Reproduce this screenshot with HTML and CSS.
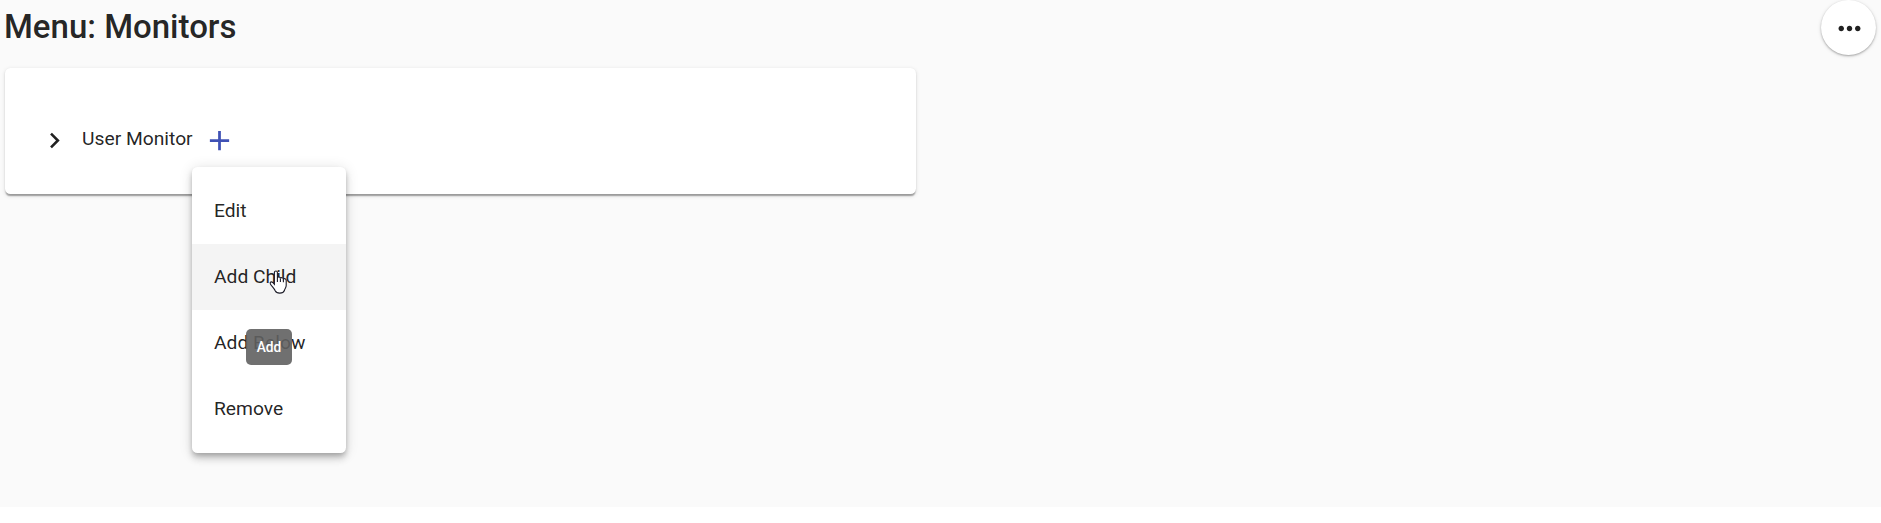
FILE: index.html
```html
<!DOCTYPE html>
<html lang="en">
<head>
<meta charset="utf-8">
<title>Menu: Monitors</title>
<link rel="stylesheet" href="styles.css">
</head>
<body>
<main class="page">
  <header class="page-header">
    <h1 class="title">Menu: Monitors</h1>
    <button class="fab" aria-label="More">
      <svg class="fab-icon" viewBox="0 0 24 24"><path d="M6 10c-1.1 0-2 .9-2 2s.9 2 2 2 2-.9 2-2-.9-2-2-2zm12 0c-1.1 0-2 .9-2 2s.9 2 2 2 2-.9 2-2-.9-2-2-2zm-6 0c-1.1 0-2 .9-2 2s.9 2 2 2 2-.9 2-2-.9-2-2-2z"/></svg>
    </button>
  </header>
  <section class="card">
    <div class="tree-node">
      <svg class="chevron" viewBox="0 0 24 24"><path d="M10 6L8.59 7.41 13.17 12l-4.58 4.59L10 18l6-6z"/></svg>
      <span class="node-label">User Monitor</span>
      <svg class="add-icon" viewBox="0 0 24 24"><path d="M19 13h-6v6h-2v-6H5v-2h6V5h2v6h6v2z"/></svg>
    </div>
  </section>
</main>
<div class="menu">
  <div class="menu-item">Edit</div>
  <div class="menu-item menu-item-hover">Add Child</div>
  <div class="menu-item">Add Below</div>
  <div class="menu-item">Remove</div>
</div>
<div class="tooltip">Add</div>
<svg class="cursor" viewBox="0 0 18 24"><path d="M5.4 14.4V2.5C5.4.4 8.4.4 8.4 2.5V8c.3-1.5 2.9-1.3 3 .4.5-1.2 2.9-.9 3 .8.7-1 2.8-.6 2.8 1.2v5.1c0 2.3-1.5 3.2-1.8 5-1.3 3.5-7.8 3.5-9.2.2-.8-2.2-3.7-4.7-4.8-6.8-.9-1.8 1-2.7 2.3-1.4z"/><path d="M8.4 8v4M11.4 8.4V12M14.4 9.2v3"/></svg>
</body>
</html>
```
FILE: styles.css
```css
* { box-sizing: border-box; }
body {
  margin: 0;
  background: #fff;
  color: rgba(0, 0, 0, 0.87);
  font-family: Roboto, sans-serif;
}
.page {
  height: 507px;
  padding: 0 5px;
  background: #fafafa;
}
.page-header {
  display: flex;
  justify-content: space-between;
  height: 68px;
}
.title {
  margin: 0 0 0 -1px;
  padding-top: 5px;
  font-size: 33px;
  font-weight: 500;
  line-height: 44px;
}
.fab {
  display: flex;
  align-items: center;
  justify-content: center;
  width: 55px;
  height: 55px;
  padding: 1px 0 0 1px;
  border: 0;
  border-radius: 50%;
  background: #fff;
  box-shadow: 0 1px 2px rgba(0, 0, 0, 0.28), 0 1px 4px rgba(0, 0, 0, 0.12);
}
.fab-icon { width: 33px; height: 33px; fill: #212121; }
.card {
  width: 911px;
  height: 126px;
  padding: 50px 33px 0 34px;
  border-radius: 5.5px;
  background: #fff;
  box-shadow: 0 2.75px 1.4px -1.4px rgba(0, 0, 0, 0.2), 0 1.4px 1.4px rgba(0, 0, 0, 0.14), 0 1.4px 4px rgba(0, 0, 0, 0.12);
}
.tree-node { display: flex; height: 44px; }
.chevron { width: 31px; height: 31px; margin-top: 7px; fill: #212121; }
.node-label {
  margin-left: 12px;
  font-size: 19.25px;
  line-height: 42px;
  white-space: nowrap;
}
.add-icon { width: 33px; height: 33px; margin: 6px 0 0 10px; fill: #3f51b5; }
.menu {
  position: absolute;
  left: 192px;
  top: 167px;
  width: 154px;
  padding: 11px 0;
  border-radius: 5.5px;
  background: #fff;
  box-shadow: 0 2.75px 5.5px -1.4px rgba(0, 0, 0, 0.2), 0 5.5px 7px rgba(0, 0, 0, 0.14), 0 1.4px 14px rgba(0, 0, 0, 0.12);
}
.menu-item {
  height: 66px;
  padding: 0 22px;
  font-size: 19.25px;
  line-height: 65px;
  white-space: nowrap;
}
.menu-item-hover { background: #f4f4f4; }
.tooltip {
  position: absolute;
  left: 246px;
  top: 329px;
  width: 46px;
  height: 36px;
  border-radius: 5px;
  background: rgba(97, 97, 97, 0.9);
  color: #fff;
  font-size: 13.75px;
  font-weight: 500;
  line-height: 36px;
  text-align: center;
}
.cursor {
  position: absolute;
  left: 269px;
  top: 270px;
  width: 18px;
  height: 24px;
  fill: #fff;
  stroke: #1c1c28;
  stroke-width: 1.1;
}
```
